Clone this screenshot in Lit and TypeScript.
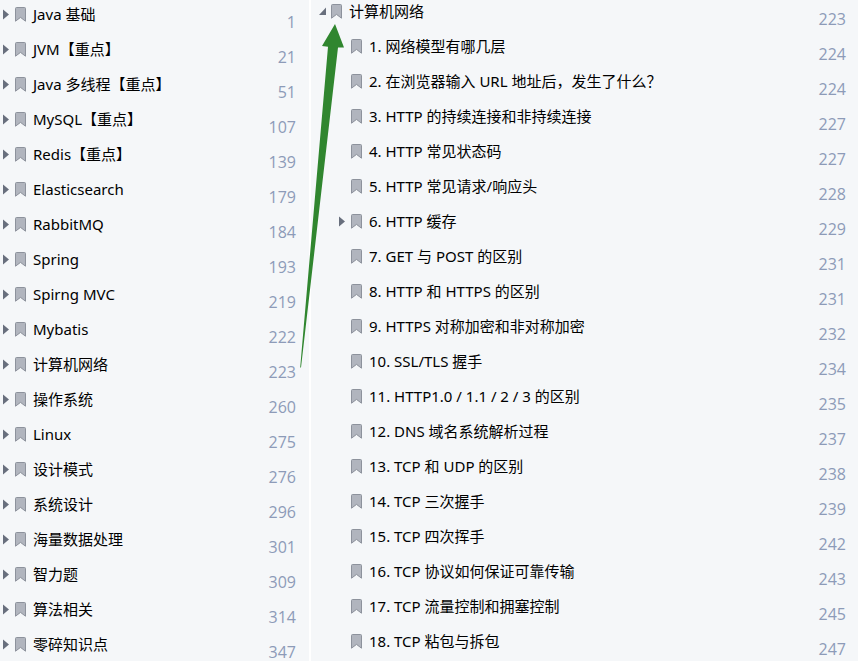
import { LitElement, css, html, nothing, svg } from "lit";
import { customElement, property } from "lit/decorators.js";

interface Bookmark {
  title: string;
  page: number;
  state?: "closed" | "open";
  children?: Bookmark[];
}

const chapters: Bookmark[] = (
  [
    ["Java 基础", 1],
    ["JVM【重点】", 21],
    ["Java 多线程【重点】", 51],
    ["MySQL【重点】", 107],
    ["Redis【重点】", 139],
    ["Elasticsearch", 179],
    ["RabbitMQ", 184],
    ["Spring", 193],
    ["Spirng MVC", 219],
    ["Mybatis", 222],
    ["计算机网络", 223],
    ["操作系统", 260],
    ["Linux", 275],
    ["设计模式", 276],
    ["系统设计", 296],
    ["海量数据处理", 301],
    ["智力题", 309],
    ["算法相关", 314],
    ["零碎知识点", 347],
  ] as [string, number][]
).map(([title, page]) => ({ title, page, state: "closed" }));

const network: Bookmark[] = [
  {
    title: "计算机网络",
    page: 223,
    state: "open",
    children: [
      { title: "1. 网络模型有哪几层", page: 224 },
      { title: "2. 在浏览器输入 URL 地址后，发生了什么？", page: 224 },
      { title: "3. HTTP 的持续连接和非持续连接", page: 227 },
      { title: "4. HTTP 常见状态码", page: 227 },
      { title: "5. HTTP 常见请求/响应头", page: 228 },
      { title: "6. HTTP 缓存", page: 229, state: "closed" },
      { title: "7. GET 与 POST 的区别", page: 231 },
      { title: "8. HTTP 和 HTTPS 的区别", page: 231 },
      { title: "9. HTTPS 对称加密和非对称加密", page: 232 },
      { title: "10. SSL/TLS 握手", page: 234 },
      { title: "11. HTTP1.0 / 1.1 / 2 / 3 的区别", page: 235 },
      { title: "12. DNS 域名系统解析过程", page: 237 },
      { title: "13. TCP 和 UDP 的区别", page: 238 },
      { title: "14. TCP 三次握手", page: 239 },
      { title: "15. TCP 四次挥手", page: 242 },
      { title: "16. TCP 协议如何保证可靠传输", page: 243 },
      { title: "17. TCP 流量控制和拥塞控制", page: 245 },
      { title: "18. TCP 粘包与拆包", page: 247 },
    ],
  },
];

const closedCaret = svg`<path d="M0 0.5 L6 5.5 L0 10.5 Z" />`;
const openCaret = svg`<path d="M7 1.5 V9 H0 Z" />`;

@customElement("bookmark-tree")
class BookmarkTree extends LitElement {
  @property({ attribute: false }) items: Bookmark[] = [];

  static styles = css`
    :host {
      display: block;
    }
    ul {
      list-style: none;
      margin: 0;
      padding: 0;
    }
    .nested .row {
      padding-left: 20px;
    }
    .row {
      display: flex;
      align-items: flex-start;
      height: 35px;
    }
    .toggle {
      display: flex;
      align-items: center;
      flex: none;
      width: 12px;
      height: 23px;
      margin: 0;
      padding: 0;
      border: 0;
      background: none;
      color: #686f7d;
    }
    .spacer {
      flex: none;
      width: 12px;
    }
    .caret {
      width: 7px;
      height: 11px;
      fill: currentColor;
    }
    .link {
      display: flex;
      align-items: flex-start;
      flex: 1;
      min-width: 0;
      color: #000;
      text-decoration: none;
    }
    .title {
      flex: 1;
      padding-left: 7px;
      font-size: 15px;
      line-height: 23px;
      white-space: nowrap;
    }
    .mark {
      flex: none;
      width: 11px;
      height: 15px;
      margin-top: 4px;
      fill: #b1b5be;
      stroke: #8d929c;
    }
    .page {
      padding-top: 11px;
      color: #8d9bb8;
      font-family: "Open Sans", "Noto Sans", sans-serif;
      font-size: 16px;
      line-height: 17px;
    }
  `;

  private renderItem(item: Bookmark): unknown {
    const open = item.state === "open";
    return html`<li>
      <div class="row">
        ${item.state
          ? html`<button class="toggle" type="button" aria-label=${item.title} aria-expanded=${open}>
              <svg class="caret" viewBox="0 0 7 11" aria-hidden="true">${open ? openCaret : closedCaret}</svg>
            </button>`
          : html`<span class="spacer"></span>`}
        <a class="link" href="#page-${item.page}">
          <svg class="mark" viewBox="0 0 11 15" aria-hidden="true">
            <path d="M0.5 14.2 V1.5 Q0.5 0.5 1.5 0.5 H9.5 Q10.5 0.5 10.5 1.5 V14.2 L5.5 10.4 Z" />
          </svg>
          <span class="title">${item.title}</span>
          <span class="page">${item.page}</span>
        </a>
      </div>
      ${item.children
        ? html`<ul class="nested">
            ${item.children.map((child) => this.renderItem(child))}
          </ul>`
        : nothing}
    </li>`;
  }

  render() {
    return html`<ul>
      ${this.items.map((item) => this.renderItem(item))}
    </ul>`;
  }
}

@customElement("app-root")
class AppRoot extends LitElement {
  static styles = css`
    :host {
      display: grid;
      grid-template-columns: 311fr 547fr;
      position: relative;
      height: 100vh;
      background: #f5f7f9;
      font-family: "Noto Sans", "Noto Sans CJK SC", sans-serif;
    }
    .panel {
      min-width: 0;
      overflow: auto;
      scrollbar-width: none;
    }
    .chapters {
      padding: 3px 13px 0 3px;
      border-right: 2px solid #fff;
    }
    .sections {
      padding: 0 12px 0 8px;
    }
    .arrow {
      position: absolute;
      left: 300px;
      top: 24px;
      width: 45px;
      height: 344px;
      fill: #30862f;
      pointer-events: none;
    }
  `;

  render() {
    return html`
      <nav class="panel chapters">
        <bookmark-tree .items=${chapters}></bookmark-tree>
      </nav>
      <nav class="panel sections">
        <bookmark-tree .items=${network}></bookmark-tree>
      </nav>
      <svg class="arrow" viewBox="0 0 45 344" aria-hidden="true">
        <path d="M35 0 L44 23.5 L38 23.5 L1 343.5 H0.2 L28 22.8 L22 22 Z" />
      </svg>
    `;
  }
}
